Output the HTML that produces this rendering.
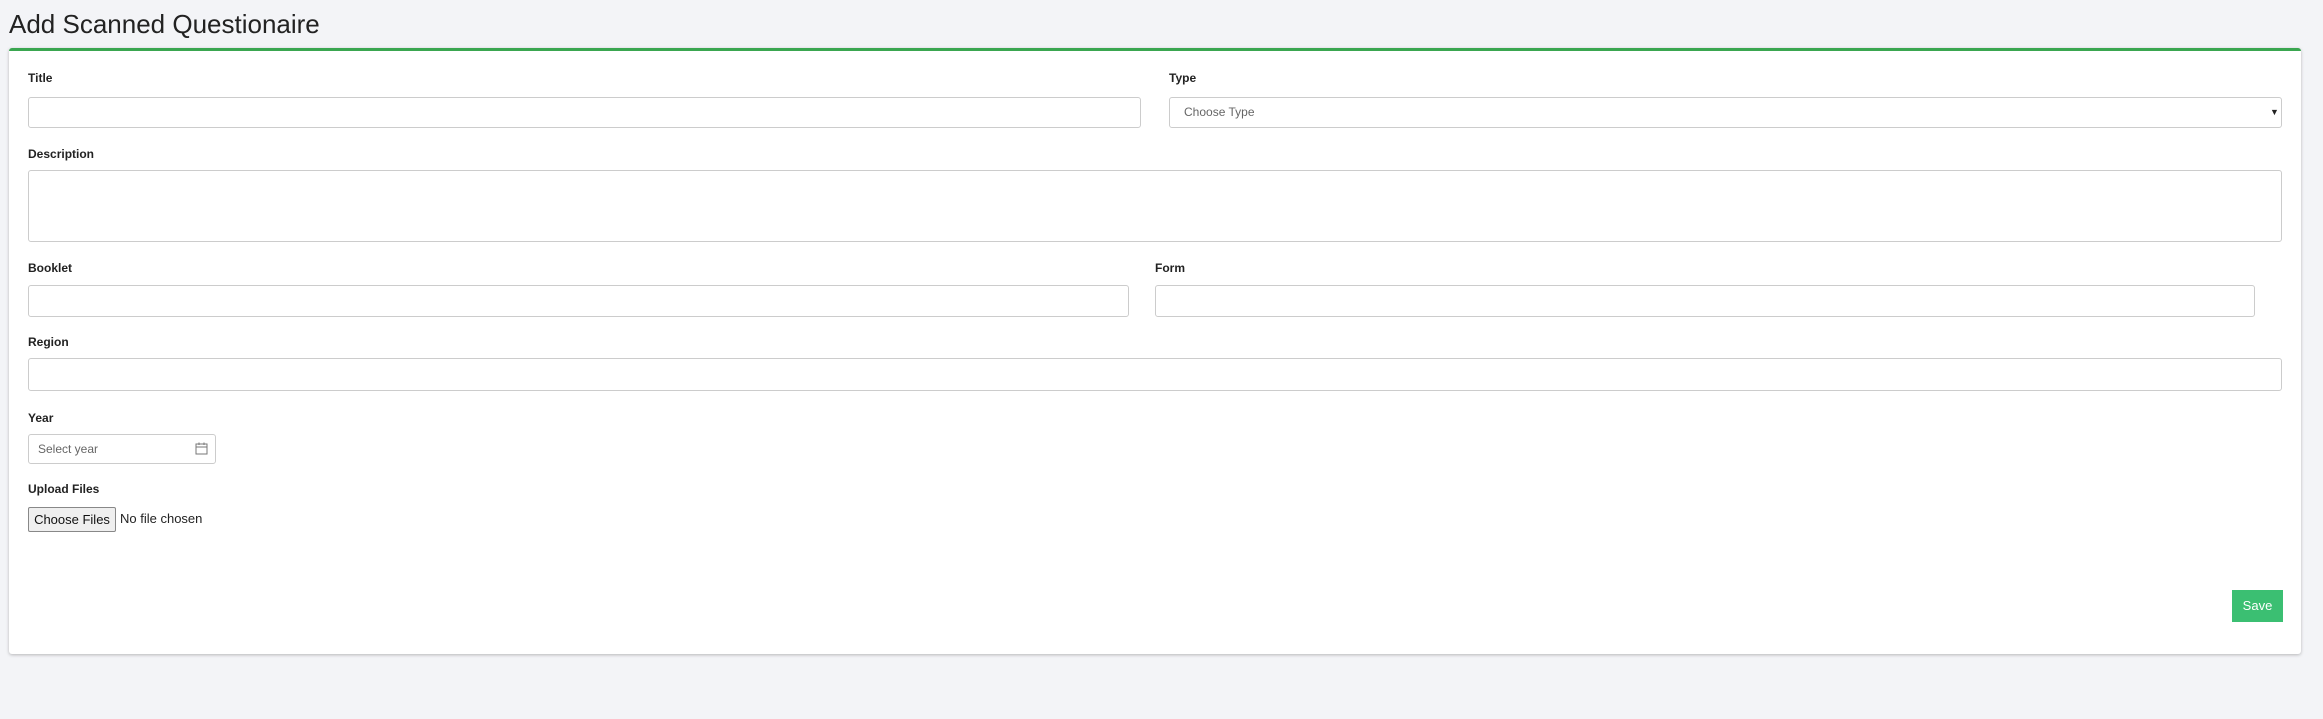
<!DOCTYPE html>
<html><head><style>
*{box-sizing:border-box;margin:0;padding:0}
body{width:2323px;height:719px;background:#f3f4f7;font-family:"Liberation Sans",sans-serif;color:#222;position:relative;overflow:hidden}
h1{position:absolute;left:9px;top:9px;font-size:26px;font-weight:400;color:#222}
.card{position:absolute;left:9px;top:48px;width:2292px;height:606px;background:#fff;border-top:3px solid #3aa650;border-radius:3px;box-shadow:0 1px 3px rgba(0,0,0,.25)}
.l{position:absolute;font-size:12px;font-weight:bold;color:#222}
.i{position:absolute;border:1px solid #ccc;border-radius:3px;background:#fff}
.ph{position:absolute;font-size:12px;color:#666}
.save{position:absolute;left:2232px;top:590px;width:51px;height:32px;background:#3bbf72;color:#fff;font-size:13px;text-align:center;line-height:32px}
.btn{position:absolute;left:28px;top:507px;width:88px;height:25px;background:#efefef;border:1px solid #888;border-radius:2px;font-size:13px;text-align:center;line-height:23px;color:#111}
</style></head><body>
<h1>Add Scanned Questionaire</h1>
<div class="card"></div>
<div class="l" style="left:28px;top:71px">Title</div>
<div class="i" style="left:28px;top:97px;width:1113px;height:31px"></div>
<div class="l" style="left:1169px;top:71px">Type</div>
<div class="i" style="left:1169px;top:97px;width:1113px;height:31px"></div>
<div class="ph" style="left:1184px;top:105px">Choose Type</div>
<div style="position:absolute;left:2270px;top:107px;font-size:9px">▼</div>
<div class="l" style="left:28px;top:147px">Description</div>
<div class="i" style="left:28px;top:170px;width:2254px;height:72px"></div>
<div class="l" style="left:28px;top:261px">Booklet</div>
<div class="i" style="left:28px;top:285px;width:1101px;height:32px"></div>
<div class="l" style="left:1155px;top:261px">Form</div>
<div class="i" style="left:1155px;top:285px;width:1100px;height:32px"></div>
<div class="l" style="left:28px;top:335px">Region</div>
<div class="i" style="left:28px;top:358px;width:2254px;height:33px"></div>
<div class="l" style="left:28px;top:411px">Year</div>
<div class="i" style="left:28px;top:434px;width:188px;height:30px"></div>
<div class="ph" style="left:38px;top:442px">Select year</div>
<svg style="position:absolute;left:195px;top:442px" width="13" height="13" viewBox="0 0 13 13" fill="none" stroke="#777" stroke-width="1"><rect x="1" y="2" width="11" height="10"/><line x1="1" y1="5" x2="12" y2="5"/><line x1="4" y1="0.5" x2="4" y2="3"/><line x1="9" y1="0.5" x2="9" y2="3"/></svg>
<div class="l" style="left:28px;top:482px">Upload Files</div>
<div class="btn">Choose Files</div>
<div style="position:absolute;left:120px;top:511px;font-size:13px;color:#222">No file chosen</div>
<div class="save">Save</div>
</body></html>
